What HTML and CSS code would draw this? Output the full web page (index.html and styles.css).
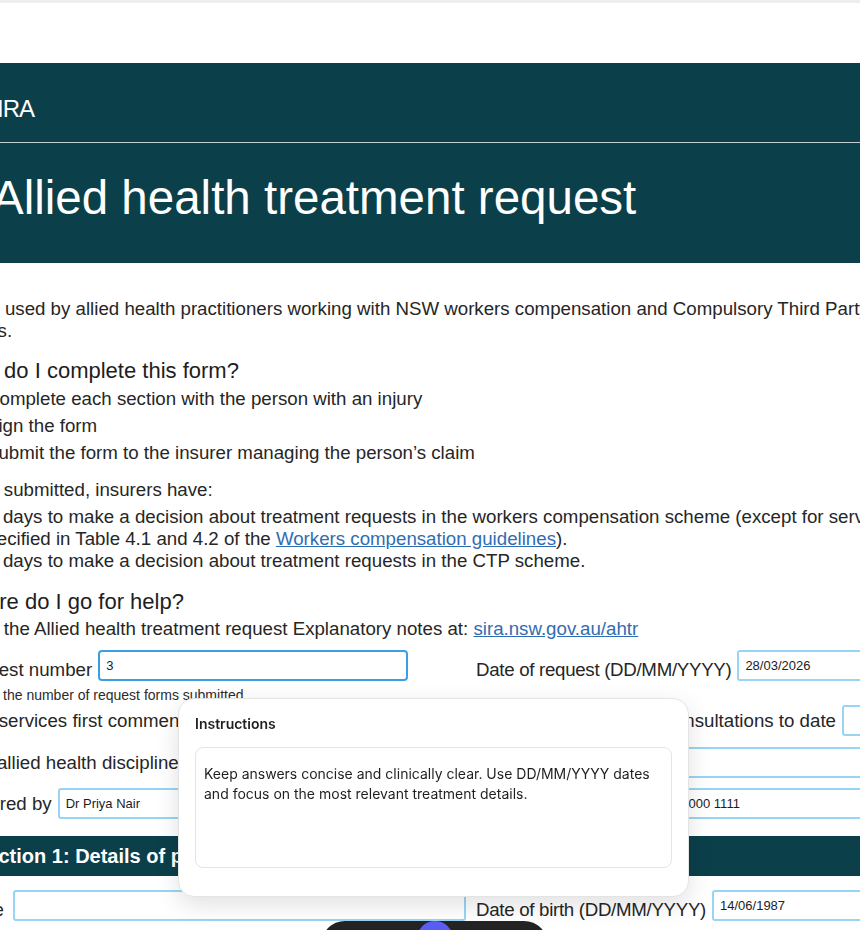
FILE: index.html
```html
<!DOCTYPE html>
<html lang="en-AU">
<head>
    <meta charset="UTF-8">
    <meta name="viewport" content="width=device-width, initial-scale=1.0">
    <title>Allied health treatment request</title>
    <link rel="stylesheet" href="styles.css">
</head>
<body>
    <div class="browser-strip"></div>

    <div class="page">
        <header class="site-header">
            <div class="brand">SIRA</div>
            <h1 class="title">Allied health treatment request</h1>
        </header>

        <main class="content">
            <p class="intro">To be used by allied health practitioners working with NSW workers compensation and Compulsory Third Party (CTP) claims.</p>

            <h2 class="section-heading">How do I complete this form?</h2>
            <ol class="steps">
                <li>Complete each section with the person with an injury</li>
                <li>Sign the form</li>
                <li>Submit the form to the insurer managing the person’s claim</li>
            </ol>

            <p class="lead">Once submitted, insurers have:</p>
            <ul class="timeframes">
                <li>10 days to make a decision about treatment requests in the workers compensation scheme (except for services specified in Table 4.1 and 4.2 of the <a href="#">Workers compensation guidelines</a>).</li>
                <li>10 days to make a decision about treatment requests in the CTP scheme.</li>
            </ul>

            <h2 class="section-heading help-heading">Where do I go for help?</h2>
            <p class="help">Read the Allied health treatment request Explanatory notes at: <a href="#">sira.nsw.gov.au/ahtr</a></p>

            <form class="request-form">
                <div class="form-row row-low">
                    <div class="field">
                        <label for="requestNumber">Request number</label>
                        <input type="text" id="requestNumber" class="input-request is-active" value="3">
                    </div>
                    <div class="field">
                        <label for="requestDate" class="label-tight">Date of request (DD/MM/YYYY)</label>
                        <input type="text" id="requestDate" value="28/03/2026">
                    </div>
                </div>
                <p class="hint">Include the number of request forms submitted</p>

                <div class="form-row row-services">
                    <div class="field">
                        <label for="firstDate">Date services first commenced</label>
                        <input type="text" id="firstDate">
                    </div>
                    <div class="field field-end">
                        <label for="consults">Number of consultations to date</label>
                        <input type="text" id="consults" class="input-short">
                    </div>
                </div>

                <div class="form-row row-full">
                    <div class="field">
                        <label for="discipline">Your allied health discipline</label>
                        <input type="text" id="discipline">
                    </div>
                </div>

                <div class="form-row row-referrer">
                    <div class="field">
                        <label for="referrer">Referred by</label>
                        <input type="text" id="referrer" value="Dr Priya Nair">
                    </div>
                    <div class="field">
                        <label for="phone">Telephone number</label>
                        <input type="text" id="phone" value="+61 2 9000 1111">
                    </div>
                </div>

                <h3 class="form-section">Section 1: Details of person receiving treatment</h3>

                <div class="form-row row-low">
                    <div class="field">
                        <label for="name" class="label-name">Name</label>
                        <input type="text" id="name">
                    </div>
                    <div class="field">
                        <label for="dob" class="label-tight">Date of birth (DD/MM/YYYY)</label>
                        <input type="text" id="dob" value="14/06/1987">
                    </div>
                </div>
            </form>
        </main>
    </div>

    <div class="instructions">
        <h3>Instructions</h3>
        <div class="instructions-body">Keep answers concise and clinically clear. Use DD/MM/YYYY dates and focus on the most relevant treatment details.</div>
    </div>

    <div class="dock">
        <span class="dock-btn"></span>
    </div>
</body>
</html>
```

FILE: styles.css
```css
html, body {
    margin: 0;
}

body {
    font-family: "Liberation Sans", Arial, sans-serif;
    color: #262626;
    background-color: #fff;
    overflow: hidden;
}

.browser-strip {
    height: 3px;
    background-color: #eeeeee;
}

/* page is wider than the window and scrolled a little to the right */
.page {
    width: 998px;
    margin: 60px 0 0 -46px;
}

.site-header {
    background-color: #0b3f4a;
    color: #fff;
}

.brand {
    padding: 34px 0 21px 28px;
    font-size: 24px;
    line-height: 24px;
    letter-spacing: -1px;
    border-bottom: 1px solid #c3cfd2;
}

.title {
    margin: 0;
    padding: 31px 0 42px 38px;
    font-size: 47.5px;
    line-height: 47px;
    font-weight: 400;
}

.content {
    padding-top: 35px;
    font-size: 18.7px;
    line-height: 22px;
}

.content a {
    color: #2f6db3;
}

.intro {
    margin: 0 0 16px;
}

.section-heading {
    margin: 0;
    font-size: 22px;
    line-height: 26px;
    font-weight: 400;
    color: #1e1e1e;
}

.steps {
    margin: 1px 0 13px;
    padding-left: 32px;
    line-height: 27px;
}

.lead {
    margin: 0 0 5px;
}

.timeframes {
    margin: 0 0 17px;
    padding-left: 23px;
}

.help-heading {
    margin-bottom: 3px;
}

.help {
    margin: 0 0 10px;
}

/* form */
.form-row {
    display: grid;
    grid-template-columns: 512px 476px;
    column-gap: 10px;
}

.row-services {
    margin-bottom: 11px;
}

.row-full {
    grid-template-columns: 1fr;
    margin-bottom: 10px;
}

.row-referrer {
    margin-bottom: 17px;
}

.field {
    display: flex;
    align-items: center;
    gap: 6px;
}

.row-low .field {
    align-items: flex-end;
}

.field-end {
    justify-content: flex-end;
}

.field label {
    white-space: nowrap;
}

.label-tight {
    letter-spacing: -0.3px;
}

.label-name {
    margin-right: 3px;
}

.field input {
    flex: 1;
    min-width: 0;
    height: 31px;
    box-sizing: border-box;
    padding: 0 6px;
    border: 2px solid #98d4f3;
    border-radius: 3px;
    font-family: "Liberation Sans", Arial, sans-serif;
    font-size: 13px;
    color: #1d1d1d;
    background-color: #fff;
    outline: none;
}

.field input.is-active {
    border-color: #3d9fe3;
    border-radius: 4px;
}

.input-request {
    flex: none !important;
    width: 310px;
}

.input-short {
    flex: none !important;
    width: 110px;
}

.hint {
    margin: 6px 0 2px;
    font-size: 14px;
    line-height: 16px;
    color: #2b2b2b;
}

.form-section {
    margin: 0 0 14px;
    padding-left: 20px;
    background-color: #0b3f4a;
    color: #fff;
    font-size: 20px;
    line-height: 40px;
    font-weight: 700;
}

/* instructions popover */
.instructions {
    position: fixed;
    left: 178px;
    top: 698px;
    width: 511px;
    height: 199px;
    box-sizing: border-box;
    padding: 15px 16px 0;
    background-color: #fff;
    border: 1px solid #e4e4e4;
    border-radius: 16px;
    box-shadow: 0 8px 24px rgba(0,0,0,0.12);
    font-family: Inter, "Liberation Sans", sans-serif;
    color: #1f1f1f;
}

.instructions h3 {
    margin: 0 0 13px;
    font-size: 14px;
    line-height: 20px;
    font-weight: 600;
}

.instructions-body {
    height: 121px;
    box-sizing: border-box;
    padding: 16px 8px;
    border: 1px solid #e5e5e5;
    border-radius: 8px;
    font-size: 14px;
    line-height: 20px;
}

/* floating toolbar at the bottom */
.dock {
    position: fixed;
    left: 321px;
    top: 921px;
    width: 227px;
    height: 48px;
    border-radius: 24px;
    background-color: #232323;
}

.dock-btn {
    position: absolute;
    left: 96px;
    top: 0;
    width: 36px;
    height: 36px;
    border-radius: 50%;
    background-color: #5b5cf2;
}
```
